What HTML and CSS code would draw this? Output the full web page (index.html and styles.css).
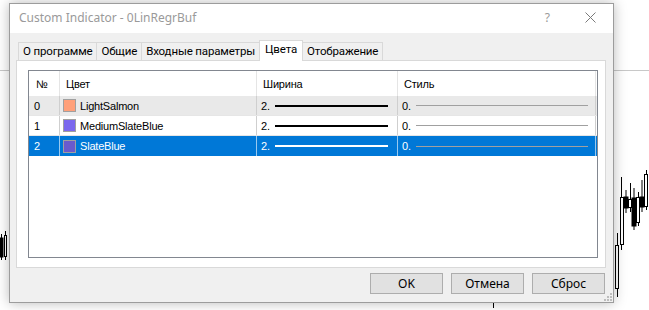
FILE: index.html
```html
<!DOCTYPE html>
<html lang="ru">
<head>
    <meta charset="UTF-8">
    <title>Custom Indicator - 0LinRegrBuf</title>
    <link rel="stylesheet" href="styles.css">
</head>
<body>
    <!-- график позади окна -->
    <svg class="chart" width="649" height="310" viewBox="0 0 649 310">
        <line x1="0" y1="70.5" x2="649" y2="70.5" stroke="#c8c8c8"/>
        <g stroke="#000" stroke-width="1">
            <line x1="1.5" y1="234" x2="1.5" y2="260"/>
            <rect x="0" y="238" width="3" height="19" fill="#000"/>
            <line x1="5.5" y1="231" x2="5.5" y2="260"/>
            <rect x="4.5" y="235.5" width="2" height="21" fill="#fff"/>
            <line x1="9.5" y1="215" x2="9.5" y2="242"/>

            <line x1="493.5" y1="303" x2="493.5" y2="308"/>

            <line x1="613.5" y1="255" x2="613.5" y2="296"/>
            <line x1="617.5" y1="233" x2="617.5" y2="297"/>
            <rect x="615.5" y="245.5" width="3" height="43" fill="#fff"/>
            <line x1="621.5" y1="177" x2="621.5" y2="250"/>
            <rect x="620.5" y="197.5" width="3" height="47" fill="#fff"/>
            <line x1="626" y1="190" x2="626" y2="213"/>
            <rect x="624" y="197" width="4" height="11" fill="#000"/>
            <line x1="630.5" y1="183" x2="630.5" y2="212"/>
            <rect x="628.5" y="199.5" width="3" height="8" fill="#fff"/>
            <line x1="634" y1="188" x2="634" y2="230"/>
            <rect x="632" y="198" width="4" height="28" fill="#000"/>
            <line x1="638.5" y1="192" x2="638.5" y2="226"/>
            <rect x="636.5" y="197.5" width="3" height="25" fill="#fff"/>
            <line x1="642" y1="180" x2="642" y2="212"/>
            <rect x="640" y="197" width="4" height="10" fill="#000"/>
            <line x1="646.5" y1="170" x2="646.5" y2="210"/>
            <rect x="644.5" y="174.5" width="3" height="32" fill="#fff"/>
        </g>
    </svg>

    <div class="dialog">
        <div class="titlebar">
            <span class="title">Custom Indicator - 0LinRegrBuf</span>
            <span class="help">?</span>
            <svg class="close" width="11" height="11" viewBox="0 0 11 11">
                <path d="M0.5 0.5 L10.5 10.5 M10.5 0.5 L0.5 10.5" stroke="#7a7a7a" stroke-width="1"/>
            </svg>
        </div>

        <div class="tabs">
            <div class="tab">О программе</div>
            <div class="tab">Общие</div>
            <div class="tab">Входные параметры</div>
            <div class="tab active">Цвета</div>
            <div class="tab">Отображение</div>
        </div>

        <div class="panel">
            <div class="list">
                <div class="row head">
                    <div class="cell num">№</div>
                    <div class="cell">Цвет</div>
                    <div class="cell">Ширина</div>
                    <div class="cell">Стиль</div>
                </div>
                <div class="row gray">
                    <div class="cell num">0</div>
                    <div class="cell color"><span class="swatch salmon"></span>LightSalmon</div>
                    <div class="cell width">2.<span class="stroke thick"></span></div>
                    <div class="cell style">0.<span class="stroke thin"></span></div>
                </div>
                <div class="row">
                    <div class="cell num">1</div>
                    <div class="cell color"><span class="swatch medium"></span>MediumSlateBlue</div>
                    <div class="cell width">2.<span class="stroke thick"></span></div>
                    <div class="cell style">0.<span class="stroke thin"></span></div>
                </div>
                <div class="row selected">
                    <div class="cell num">2</div>
                    <div class="cell color"><span class="swatch slate"></span>SlateBlue</div>
                    <div class="cell width">2.<span class="stroke thick"></span></div>
                    <div class="cell style">0.<span class="stroke thin"></span></div>
                </div>
            </div>
        </div>

        <div class="buttons">
            <button>OK</button>
            <button>Отмена</button>
            <button>Сброс</button>
        </div>

        <svg class="grip" width="8" height="8" viewBox="0 0 8 8">
            <g fill="#bdbdbd">
                <rect x="6" y="0" width="2" height="2"/>
                <rect x="3" y="3" width="2" height="2"/>
                <rect x="6" y="3" width="2" height="2"/>
                <rect x="0" y="6" width="2" height="2"/>
                <rect x="3" y="6" width="2" height="2"/>
                <rect x="6" y="6" width="2" height="2"/>
            </g>
        </svg>
    </div>
</body>
</html>
```

FILE: styles.css
```css
body {
    margin: 0;
    width: 649px;
    height: 310px;
    position: relative;
    overflow: hidden;
    background-color: #ffffff;
    font-family: 'Noto Sans', sans-serif;
    font-size: 12px;
}

.chart {
    position: absolute;
    left: 0;
    top: 0;
}

/* окно диалога */
.dialog {
    position: absolute;
    left: 9px;
    top: 3px;
    width: 605px;
    height: 300px;
    box-sizing: border-box;
    border: 1px solid #9c9c9c;
    background-color: #f0f0f0;
    box-shadow: 0 0 12px rgba(0, 0, 0, 0.28);
    display: flex;
    flex-direction: column;
}

.titlebar {
    height: 29px;
    flex: none;
    background-color: #ffffff;
    display: flex;
    align-items: center;
    padding: 0 17px 0 9px;
    color: #9a9a9a;
}

.title {
    margin-top: -2px;
}

.help {
    margin-left: auto;
    margin-right: 35px;
    margin-top: -2px;
}

.close {
    margin-top: -2px;
}

/* вкладки */
.tabs {
    display: flex;
    align-items: flex-end;
    height: 20px;
    margin: 7px 0 0 8px;
    position: relative;
    z-index: 1;
    font-family: 'Roboto', sans-serif;
    font-size: 11.5px;
    letter-spacing: -0.15px;
}

.tab {
    height: 18px;
    box-sizing: border-box;
    border: 1px solid #d9d9d9;
    border-bottom: none;
    margin-left: -1px;
    padding: 0 4px;
    line-height: 16px;
    background-color: #f0f0f0;
    color: #000000;
}

.tab:first-child {
    margin-left: 0;
}

.tab.active {
    height: 21px;
    margin-bottom: -1px;
    padding: 0 5px;
    line-height: 17px;
    background-color: #ffffff;
}

.panel {
    height: 208px;
    box-sizing: border-box;
    margin: 0 7px 0 6px;
    border: 1px solid #d9d9d9;
    background-color: #ffffff;
    padding: 9px 7px 9px 11px;
}

/* таблица цветов */
.list {
    height: 188px;
    box-sizing: border-box;
    border: 1px solid #828790;
    background-color: #ffffff;
    font-family: 'Liberation Sans', Arial, sans-serif;
    font-size: 11px;
    letter-spacing: -0.2px;
}

.row {
    display: grid;
    grid-template-columns: 31px 197px 141px 198px;
    height: 20px;
    box-sizing: border-box;
    border-bottom: 1px solid #e6e6e6;
}

.row.head {
    height: 25px;
    border-bottom: none;
}

.row.gray {
    background-color: #e9e9e9;
}

.row.selected {
    background-color: #0078d7;
    color: #ffffff;
    border-bottom: none;
}

.cell {
    display: flex;
    align-items: center;
    border-right: 1px solid #cfcfcf;
    padding-left: 5px;
    white-space: nowrap;
    overflow: hidden;
}

.head .cell {
    border-right-color: #e5e5e5;
    padding-left: 6px;
}

.head .cell.num {
    padding-left: 7px;
}

.selected .cell {
    border-right-color: #99c9ef;
}

.cell.color {
    padding-left: 3px;
}

.cell.width,
.cell.style {
    padding-left: 4px;
}

.swatch {
    width: 11px;
    height: 11px;
    border: 1px solid #a0a0a0;
    margin-right: 4px;
    flex: none;
}

.swatch.salmon {
    background-color: #ffa07a;
}

.swatch.medium {
    background-color: #7b68ee;
}

.swatch.slate {
    background-color: #6a5acd;
}

.stroke {
    flex: 1;
    margin-left: 5px;
}

.stroke.thick {
    height: 2px;
    margin-right: 9px;
    background-color: #000000;
}

.selected .stroke.thick {
    background-color: #ffffff;
}

.stroke.thin {
    height: 1px;
    margin-right: 7px;
    background-color: #a0a0a0;
}

/* кнопки */
.buttons {
    display: flex;
    justify-content: flex-end;
    gap: 8px;
    margin-top: 5px;
    padding-right: 8px;
}

button {
    width: 73px;
    height: 21px;
    box-sizing: border-box;
    border: 1px solid #adadad;
    background-color: #e1e1e1;
    font-family: 'Noto Sans', sans-serif;
    font-size: 12px;
    color: #000000;
    padding: 0;
}

.grip {
    position: absolute;
    right: 1px;
    bottom: 1px;
}
```
